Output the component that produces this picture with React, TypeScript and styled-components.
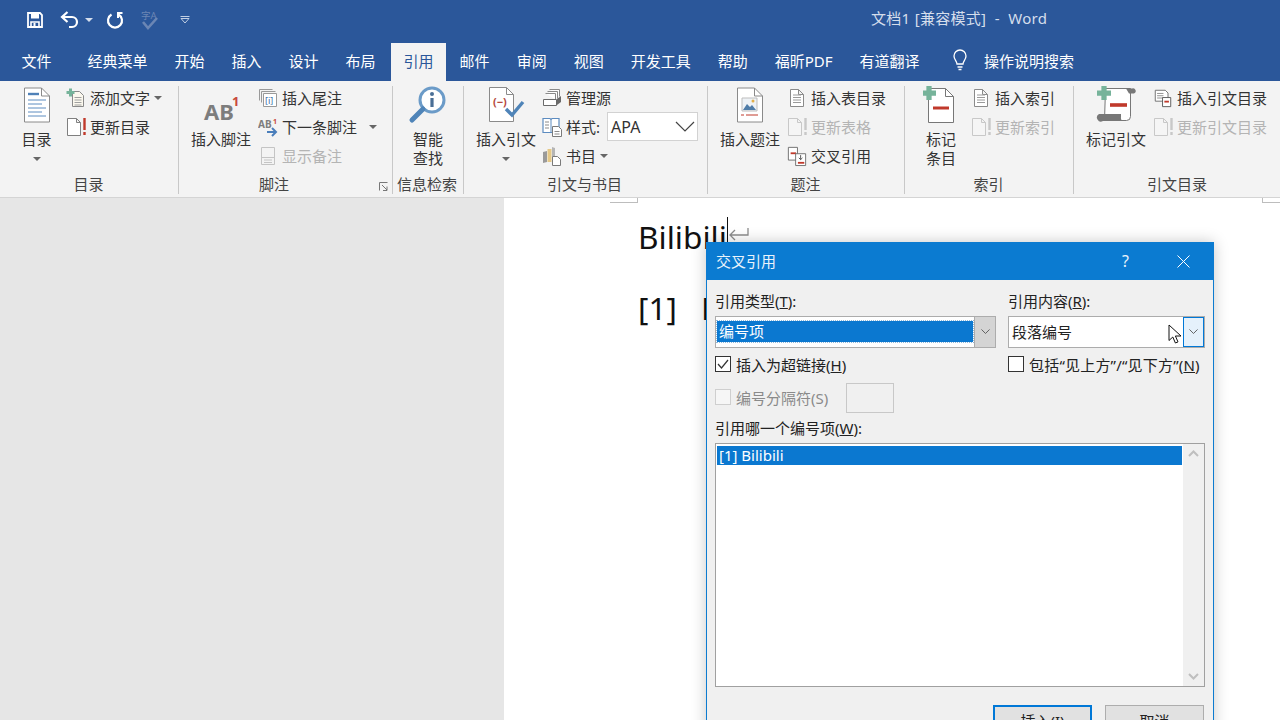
import React from 'react'
import styled, { createGlobalStyle } from 'styled-components'

const FONT = `"Noto Sans", "Noto Sans CJK SC", sans-serif`

const GlobalStyle = createGlobalStyle`
  html, body {
    margin: 0;
    padding: 0;
    overflow: hidden;
    background: #fff;
  }
  body {
    font-family: ${FONT};
    font-size: 15px;
    color: #333;
  }
`

const Screen = styled.div`
  position: relative;
  display: flex;
  flex-direction: column;
  width: 1280px;
  height: 720px;
  overflow: hidden;
`

const TitleBar = styled.div`
  display: flex;
  align-items: center;
  height: 40px;
  background: #2b579a;
  color: #d5deec;
`

const Qat = styled.div`
  display: flex;
  align-items: center;
  width: 871px;
  padding-left: 24px;
  box-sizing: border-box;
`

const QatSlot = styled.div<{ $w: number; $ml?: number }>`
  display: flex;
  align-items: center;
  justify-content: center;
  width: ${({ $w }) => $w}px;
  margin-left: ${({ $ml }) => $ml ?? 0}px;
`

const DocTitle = styled.div`
  font-size: 15px;
  letter-spacing: 0.3px;
  margin-top: -5px;
  white-space: pre;
`

const TabBar = styled.div`
  display: flex;
  align-items: stretch;
  height: 41px;
  background: #2b579a;
  padding-left: 8px;
`

const Tab = styled.div<{ $active?: boolean; $gap?: number }>`
  display: flex;
  align-items: center;
  padding: 0 ${({ $active }) => ($active ? 12.5 : 13.5)}px 4px;
  margin-top: 3px;
  margin-left: ${({ $active }) => ($active ? 2 : 0)}px;
  margin-right: ${({ $gap }) => $gap ?? 0}px;
  color: ${({ $active }) => ($active ? '#2b579a' : '#fff')};
  background: ${({ $active }) => ($active ? '#f3f3f3' : 'transparent')};
  font-size: 15px;
  white-space: nowrap;
`

const TellMe = styled.div`
  display: flex;
  align-items: center;
  gap: 15px;
  margin-left: 18px;
  margin-top: 3px;
  padding-bottom: 4px;
  color: #fff;
  font-size: 15px;
`

const Ribbon = styled.div`
  display: flex;
  height: 117px;
  box-sizing: border-box;
  background: #f3f3f3;
  border-bottom: 1px solid #d4d4d4;
`

const Group = styled.div<{ $w: number; $last?: boolean }>`
  position: relative;
  display: flex;
  flex-direction: column;
  width: ${({ $w }) => $w}px;
  flex: none;
  box-sizing: border-box;
  &::after {
    content: '';
    display: ${({ $last }) => ($last ? 'none' : 'block')};
    position: absolute;
    right: 0;
    top: 5px;
    bottom: 3px;
    width: 1px;
    background: #c8c8c8;
  }
`

const GroupBody = styled.div<{ $pad: number; $gap?: number }>`
  display: flex;
  height: 91px;
  box-sizing: border-box;
  padding: 2px 0 0 ${({ $pad }) => $pad}px;
  gap: ${({ $gap }) => $gap ?? 7}px;
`

const GroupLabel = styled.div<{ $right?: number }>`
  text-align: center;
  line-height: 24px;
  padding-right: ${({ $right }) => $right ?? 0}px;
  font-size: 15px;
  color: #444;
`

const Launcher = styled.div`
  position: absolute;
  right: 5px;
  bottom: 6px;
  display: flex;
`

const BigButton = styled.div<{ $w: number }>`
  display: flex;
  flex-direction: column;
  align-items: center;
  width: ${({ $w }) => $w}px;
  flex: none;
`

const BigIcon = styled.div`
  display: flex;
  align-items: center;
  justify-content: center;
  height: 43px;
`

const BigText = styled.div`
  line-height: 19px;
  text-align: center;
  white-space: nowrap;
  font-size: 15px;
  margin-top: 4px;
`

const Caret = styled.span<{ $light?: boolean; $ml?: number }>`
  display: inline-block;
  width: 0;
  height: 0;
  margin-left: ${({ $ml }) => $ml ?? 0}px;
  border-left: 4px solid transparent;
  border-right: 4px solid transparent;
  border-top: 4px solid ${({ $light }) => ($light ? '#d5deec' : '#666')};
`

const BigCaret = styled(Caret)`
  margin-top: 8px;
`

const SmallColumn = styled.div<{ $ml?: number }>`
  display: flex;
  flex-direction: column;
  margin-left: ${({ $ml }) => $ml ?? 0}px;
`

const SmallRow = styled.div<{ $disabled?: boolean }>`
  display: flex;
  align-items: center;
  height: 29px;
  gap: 4px;
  color: ${({ $disabled }) => ($disabled ? '#b4b4b4' : '#333')};
  white-space: nowrap;
`

const SmallIcon = styled.span`
  display: flex;
  width: 20px;
  justify-content: center;
  flex: none;
`

const StyleSelect = styled.div`
  display: flex;
  align-items: center;
  justify-content: space-between;
  width: 91px;
  height: 29px;
  margin-left: 3px;
  padding: 0 2px 0 3px;
  box-sizing: border-box;
  background: #fff;
  border: 1px solid #d2d2d2;
  font-size: 16px;
`

const Workspace = styled.div`
  display: flex;
  flex: 1;
  min-height: 0;
`

const Gutter = styled.div`
  width: 504px;
  flex: none;
  background: #e6e6e6;
`

const Sheet = styled.div`
  position: relative;
  flex: 1;
  padding: 17px 0 0 134px;
  background: #fff;
  color: #111;
  font-size: 31.6px;
  line-height: 44px;
`

const CropMark = styled.div<{ $side: 'left' | 'right' }>`
  position: absolute;
  top: 0;
  height: 5px;
  box-sizing: border-box;
  border-bottom: 1px solid #bdbdbd;
  ${({ $side }) =>
    $side === 'left'
      ? 'left: 106px; width: 28px; border-right: 1px solid #bdbdbd;'
      : 'right: 0; width: 18px; border-left: 1px solid #bdbdbd;'}
`

const DocLine = styled.div`
  display: flex;
  align-items: center;
  white-space: nowrap;
  margin-bottom: 27px;
`

const Cursor = styled.span`
  display: inline-block;
  width: 1px;
  height: 40px;
  background: #111;
`

const ReturnMark = styled.svg`
  margin-top: -4px;
`

const RefNumber = styled.span`
  width: 63px;
`

const Dialog = styled.div`
  position: absolute;
  left: 706px;
  top: 242px;
  width: 508px;
  height: 500px;
  box-sizing: border-box;
  background: #f0f0f0;
  border: 1px solid #0c7bd0;
  box-shadow: 0 0 14px rgba(0, 0, 0, 0.22);
`

const DialogTitle = styled.div`
  display: flex;
  align-items: center;
  height: 37px;
  padding: 0 23px 0 9px;
  background: #0b7bd1;
  color: #eaf3fb;
  font-size: 15px;
`

const DialogTitleText = styled.div`
  flex: 1;
  margin-top: -2px;
`

const TitleHelp = styled.span`
  width: 55px;
  font-size: 16px;
  margin-top: -2px;
`

const DialogBody = styled.div`
  display: flex;
  flex-direction: column;
  padding: 10px 8px 0 8px;
  color: #222;
  font-size: 15px;
`

const TwoColumns = styled.div`
  display: grid;
  grid-template-columns: 281px 197px;
  column-gap: 12px;
`

const FieldLabel = styled.div`
  line-height: 22px;
  height: 26px;
  white-space: nowrap;
`

const Combo = styled.div`
  display: flex;
  height: 32px;
  box-sizing: border-box;
  background: #fff;
  border: 1px solid #acacac;
`

const ComboValue = styled.div<{ $selected?: boolean }>`
  flex: 1;
  display: flex;
  align-items: center;
  margin: ${({ $selected }) => ($selected ? '4px 1px 5px 1px' : '0')};
  padding: 0 0 2px ${({ $selected }) => ($selected ? '2px' : '3px')};
  background: ${({ $selected }) => ($selected ? '#0b78d0' : 'transparent')};
  color: ${({ $selected }) => ($selected ? '#fff' : '#222')};
  outline: ${({ $selected }) => ($selected ? '1px dotted #8fb9dc' : 'none')};
`

const ComboArrow = styled.div<{ $focus?: boolean }>`
  display: flex;
  align-items: center;
  justify-content: center;
  width: 21px;
  flex: none;
  box-sizing: border-box;
  background: ${({ $focus }) => ($focus ? '#e5f1fb' : '#d4d4d4')};
  border: ${({ $focus }) => ($focus ? '1px solid #0078d7' : 'none')};
  border-left: 1px solid ${({ $focus }) => ($focus ? '#0078d7' : '#acacac')};
`

const CheckRow = styled.div<{ $disabled?: boolean }>`
  display: flex;
  align-items: center;
  gap: 5px;
  height: 32px;
  white-space: nowrap;
  color: ${({ $disabled }) => ($disabled ? '#8a8a8a' : '#222')};
`

const SeparatorCheck = styled(CheckRow)`
  height: 30px;
  margin-top: -2px;
`

const WideLabel = styled.span`
  letter-spacing: 0.2px;
`

const CheckBox = styled.span<{ $disabled?: boolean }>`
  display: flex;
  align-items: center;
  justify-content: center;
  width: 16px;
  height: 16px;
  flex: none;
  box-sizing: border-box;
  background: ${({ $disabled }) => ($disabled ? '#f6f6f6' : '#fff')};
  border: 1px solid ${({ $disabled }) => ($disabled ? '#cfcfcf' : '#333')};
`

const SeparatorRow = styled.div`
  display: flex;
  align-items: center;
  height: 30px;
  gap: 18px;
  margin-top: 3px;
`

const SeparatorInput = styled.div`
  width: 48px;
  height: 30px;
  box-sizing: border-box;
  border: 1px solid #c8c8c8;
  background: #f0f0f0;
`

const ListLabel = styled.div`
  line-height: 30px;
  height: 30px;
  white-space: nowrap;
`

const ListBox = styled.div`
  display: flex;
  width: 490px;
  height: 244px;
  box-sizing: border-box;
  background: #fff;
  border: 1px solid #a0a0a0;
`

const ListItems = styled.div`
  flex: 1;
  padding: 2px 1px;
`

const ListItem = styled.div`
  height: 19px;
  line-height: 19px;
  padding-left: 2px;
  background: #0b78d0;
  color: #fff;
  font-size: 15px;
`

const ScrollBar = styled.div`
  display: flex;
  flex-direction: column;
  justify-content: space-between;
  align-items: center;
  width: 21px;
  flex: none;
  padding: 6px 0;
  box-sizing: border-box;
  background: #f0f0f0;
`

const ButtonRow = styled.div`
  display: flex;
  justify-content: flex-end;
  gap: 13px;
  margin-top: 18px;
  padding-right: 1px;
`

const DialogButton = styled.div<{ $primary?: boolean }>`
  display: flex;
  align-items: center;
  justify-content: center;
  width: 99px;
  height: 30px;
  box-sizing: border-box;
  background: #e1e1e1;
  border: ${({ $primary }) => ($primary ? '2px solid #0078d7' : '1px solid #adadad')};
`

const MouseCursor = styled.svg`
  position: absolute;
  left: 1168px;
  top: 324px;
`

/* ---- icons ---- */

const Lines = ({ x, y, w, n, gap = 2.5, c = '#9a9a9a' }: { x: number; y: number; w: number; n: number; gap?: number; c?: string }) => (
  <path d={Array.from({ length: n }, (_, i) => `M${x} ${y + i * gap}h${w}`).join(' ')} stroke={c} fill="none" />
)

const Bang = ({ c = '#c0392b' }: { c?: string }) => (
  <path d="M18.5 1v12M18.5 15v3" stroke={c} strokeWidth="2.4" fill="none" />
)

const PlusGreen = ({ x, y, s = 4 }: { x: number; y: number; s?: number }) => (
  <path d={`M${x - s} ${y}h${s * 2}M${x} ${y - s}v${s * 2}`} stroke="#76b39a" strokeWidth={s * 0.75} fill="none" />
)

const IconSave = () => (
  <svg width="18" height="18" viewBox="0 0 18 18" fill="none">
    <path d="M2 2h12l2 2v12H2z" stroke="#fff" strokeWidth="1.8" />
    <path d="M5 2.5h8v5H5z" fill="#fff" />
    <path d="M5 16v-5h8v5" stroke="#fff" strokeWidth="1.6" />
    <path d="M7.5 12v3h2v-3z" fill="#fff" />
  </svg>
)

const IconUndo = () => (
  <svg width="20" height="18" viewBox="0 0 20 18" fill="none">
    <path d="M3 6h9a5 5 0 0 1 0 10H9" stroke="#fff" strokeWidth="2.2" />
    <path d="M7.5 1L2 6l5.5 5" stroke="#fff" strokeWidth="2.2" />
  </svg>
)

const IconRepeat = () => (
  <svg width="18" height="18" viewBox="0 0 18 18" fill="none">
    <path d="M5.5 3.5a7 7 0 1 0 7 0" stroke="#fff" strokeWidth="2.2" />
    <path d="M11 1h5.5v2H13v4h-2z" fill="#fff" />
  </svg>
)

const IconSpell = () => (
  <svg width="20" height="22" viewBox="0 0 20 22" fill="none">
    <text x="1" y="10" fontSize="9.5" fill="#6b86b4" fontFamily={FONT}>字A</text>
    <path d="M3 13l5 6 9-10" stroke="#6b86b4" strokeWidth="2.6" />
  </svg>
)

const IconCustomize = () => (
  <svg width="10" height="10" viewBox="0 0 10 10" fill="none">
    <path d="M0.5 1.5h9M1 3.5l4 4.5 4-4.5z" stroke="#c2cfe3" />
  </svg>
)

const IconBulb = () => (
  <svg width="18" height="22" viewBox="0 0 18 22" fill="none">
    <path d="M6 15c0-3-3-4-3-8a6 6 0 0 1 12 0c0 4-3 5-3 8z" stroke="#fff" strokeWidth="1.3" />
    <path d="M6.5 18h5M7.5 20.5h3" stroke="#fff" strokeWidth="1.3" />
  </svg>
)

const IconToc = () => (
  <svg width="28" height="36" viewBox="0 0 28 36" fill="none">
    <path d="M1.5 1h17l8 8v26h-25z" fill="#fff" stroke="#8a8a8a" />
    <path d="M18.5 1v8h8" stroke="#8a8a8a" />
    <path d="M5 7h11" stroke="#4f81b8" strokeWidth="2.4" />
    <path d="M5 13h18M5 17h14M5 21h18M5 25h14M5 29h18" stroke="#5d8cc0" />
  </svg>
)

const IconAddText = () => (
  <svg width="20" height="20" viewBox="0 0 20 20" fill="none">
    <path d="M6.5 3.5h7l4 4v11h-11z" fill="#fbf8ee" stroke="#8a8a8a" />
    <Lines x={8.5} y={9.5} w={7} n={4} gap={2.5} c="#a0a0a0" />
    <PlusGreen x={4.5} y={4.5} />
  </svg>
)

const IconUpdate = ({ disabled }: { disabled?: boolean }) => (
  <svg width="20" height="20" viewBox="0 0 20 20" fill="none">
    <path d="M1.5 1.5h9l4 4v13h-13z M10.5 1.5v4h4" fill={disabled ? '#f5f5f5' : '#fff'} stroke={disabled ? '#c8c8c8' : '#7f7f7f'} />
    <Bang c={disabled ? '#c8c8c8' : '#c0392b'} />
  </svg>
)

const IconFootnote = () => (
  <svg width="44" height="36" viewBox="0 0 44 36">
    <text x="5" y="33" fontSize="22" fontWeight="700" fill="#7d7d7d" fontFamily={FONT}>AB</text>
    <text x="33" y="19" fontSize="13" fontWeight="700" fill="#c8493c" fontFamily={FONT}>1</text>
  </svg>
)

const IconEndnote = () => (
  <svg width="20" height="20" viewBox="0 0 20 20" fill="none">
    <path d="M1.5 1.5h13M3.5 3.5h14M1.5 1.5v11M3.5 3.5v11" stroke="#999" />
    <path d="M5.5 5.5h13v13h-13z" fill="#fff" stroke="#999" />
    <text x="7" y="16" fontSize="9" fill="#3d6fa8" fontFamily={FONT}>[i]</text>
  </svg>
)

const IconNextFootnote = () => (
  <svg width="20" height="20" viewBox="0 0 20 20" fill="none">
    <text x="0" y="11" fontSize="10" fontWeight="700" fill="#7d7d7d" fontFamily={FONT}>AB</text>
    <text x="15" y="7" fontSize="7" fontWeight="700" fill="#c8493c" fontFamily={FONT}>1</text>
    <path d="M9 15h9M14 11l4 4-4 4" stroke="#4a7ebb" strokeWidth="2" />
  </svg>
)

const IconShowNotes = () => (
  <svg width="20" height="20" viewBox="0 0 20 20" fill="none">
    <path d="M3.5 1.5h13v17h-13zM3.5 11.5h13" stroke="#c4c4c4" />
    <Lines x={6} y={14} w={8} n={2} gap={2.5} c="#c4c4c4" />
  </svg>
)

const IconSmart = () => (
  <svg width="40" height="40" viewBox="0 0 40 40" fill="none">
    <circle cx="24" cy="15" r="12" fill="#fff" stroke="#6b9bc8" strokeWidth="3" />
    <path d="M15 24L4 35" stroke="#4f84b8" strokeWidth="5" strokeLinecap="round" />
    <circle cx="24" cy="9" r="2" fill="#4a6f96" />
    <path d="M24 13v9" stroke="#4a6f96" strokeWidth="3.2" />
  </svg>
)

const IconCitation = () => (
  <svg width="38" height="38" viewBox="0 0 38 38" fill="none">
    <path d="M2.5 1.5h17l7 7v27h-24z" fill="#fff" stroke="#8a8a8a" />
    <path d="M19.5 1.5v7h7" stroke="#8a8a8a" />
    <text x="6" y="20" fontSize="11" fontWeight="700" fill="#b5493e" fontFamily={FONT}>(−)</text>
    <path d="M19 23l6 6 11-13" stroke="#4f84b8" strokeWidth="3.4" />
  </svg>
)

const IconSources = () => (
  <svg width="20" height="20" viewBox="0 0 20 20" fill="none">
    <path d="M7.5 1.5h10v7M5.5 3.5h10v7M3.5 5.5h10v6" stroke="#8a8a8a" fill="#fff" />
    <path d="M1.5 11.5h13v6h-13z" fill="#fff" stroke="#6a6a6a" />
    <path d="M15 17l4-3V8l-4 3z" fill="#6a6a6a" />
  </svg>
)

const IconStyleBook = () => (
  <svg width="20" height="22" viewBox="0 0 20 22" fill="none">
    <path d="M1 2.5h7l1 1 1-1h7v14H1z" fill="#fff" stroke="#5d8cc0" strokeWidth="1.2" />
    <path d="M9 3.5v13" stroke="#5d8cc0" />
    <path d="M3 6h4M3 9h4M3 12h4" stroke="#8a8a8a" />
    <path d="M10.5 10.5h6l3 3v7h-9z" fill="#fff" stroke="#7a7a7a" />
    <path d="M12.5 15.5h5M12.5 18h5" stroke="#8a8a8a" />
  </svg>
)

const IconBooks = () => (
  <svg width="20" height="20" viewBox="0 0 20 20" fill="none">
    <path d="M1 6l4-1v11l-4 1z" fill="#9a9a9a" />
    <path d="M5.5 3h4v13h-4z" fill="#e5c886" />
    <path d="M10 1l3 1v8h-3z" fill="#b5b5b5" />
    <path d="M10.5 10.5h5l3 3v6h-8z" fill="#fff" stroke="#7a7a7a" />
  </svg>
)

const IconCaption = () => (
  <svg width="28" height="36" viewBox="0 0 28 36" fill="none">
    <path d="M1.5 1h17l8 8v26h-25z" fill="#fff" stroke="#8a8a8a" />
    <path d="M18.5 1v8h8" stroke="#8a8a8a" />
    <path d="M6 11h15v13H6z" fill="#eef2f6" stroke="#bdbdbd" />
    <path d="M7 23l4-6 3 3 2-2 4 5z" fill="#4f7ca8" />
    <circle cx="17" cy="14" r="1.5" fill="#e2b04a" />
    <path d="M5 28h3M10 28h12" stroke="#c0392b" />
  </svg>
)

const IconTableOfFigures = () => (
  <svg width="20" height="20" viewBox="0 0 20 20" fill="none">
    <path d="M3.5 1.5h8l5 5v12h-13z M11.5 1.5v5h5" fill="#fff" stroke="#8a8a8a" />
    <Lines x={6} y={7} w={8} n={4} gap={2.5} />
  </svg>
)

const IconCrossRef = () => (
  <svg width="22" height="22" viewBox="0 0 22 22" fill="none">
    <path d="M1.5 1.5h10v14h-10z" fill="#fff" stroke="#6a6a6a" />
    <path d="M4 8h6" stroke="#c0392b" strokeWidth="2" />
    <path d="M9.5 8.5h11v13h-11z" fill="#fff" stroke="#6a6a6a" />
    <path d="M15 10v5M13 13l2 2 2-2" stroke="#4a4a4a" />
    <path d="M12 18.5h7" stroke="#c0392b" strokeWidth="2" />
  </svg>
)

const IconMarkEntry = () => (
  <svg width="36" height="40" viewBox="0 0 36 40" fill="none">
    <path d="M5.5 3.5h17l8 8v26h-25z" fill="#fff" stroke="#777" />
    <path d="M22.5 3.5v8h8" stroke="#777" />
    <path d="M10 23h16" stroke="#c0392b" strokeWidth="3" />
    <PlusGreen x={6} y={8} s={7} />
  </svg>
)

const IconMarkCitation = () => (
  <svg width="40" height="40" viewBox="0 0 40 40" fill="none">
    <path d="M9.5 3.5h25v28a4 4 0 0 1-4 4h-22z" fill="#fff" stroke="#777" />
    <path d="M30 3.5h6a2 2 0 0 1 2 5h-5z" fill="#777" />
    <path d="M3 29h22v3a3.5 3.5 0 0 0 3 4H7a4 4 0 0 1-4-7z" fill="#777" />
    <path d="M14 20h17" stroke="#c0392b" strokeWidth="3.6" />
    <PlusGreen x={8} y={8} s={7} />
  </svg>
)

const IconToa = () => (
  <svg width="22" height="20" viewBox="0 0 22 20" fill="none">
    <path d="M2.5 1.5h11l3 3v9h-14z" fill="#fff" stroke="#6a6a6a" />
    <Lines x={4.5} y={5} w={7} n={3} gap={2.5} c="#8a8a8a" />
    <path d="M10.5 9.5h9v10h-9z" fill="#fff" stroke="#555" />
    <path d="M12.5 14h5" stroke="#c0392b" strokeWidth="2" />
  </svg>
)

const IconLauncher = () => (
  <svg width="9" height="9" viewBox="0 0 9 9" fill="none">
    <path d="M0.5 8.5v-8h8M3 3l5 5M8 4.5v4H4" stroke="#777" />
  </svg>
)

const Chevron = ({ w = 9, c = '#555' }: { w?: number; c?: string }) => (
  <svg width={w} height={w * 0.6} viewBox="0 0 10 6" fill="none">
    <path d="M0.5 0.5L5 5l4.5-4.5" stroke={c} strokeWidth={w > 10 ? 0.6 : 1} />
  </svg>
)

const ChevronUp = ({ c = '#bfbfbf' }: { c?: string }) => (
  <svg width="11" height="7" viewBox="0 0 11 7" fill="none">
    <path d="M1 6l4.5-4.5L10 6" stroke={c} strokeWidth="2" />
  </svg>
)

const ChevronDown = ({ c = '#bfbfbf' }: { c?: string }) => (
  <svg width="11" height="7" viewBox="0 0 11 7" fill="none">
    <path d="M1 1l4.5 4.5L10 1" stroke={c} strokeWidth="2" />
  </svg>
)

const tabs = ['开始', '插入', '设计', '布局']
const tabsAfter = ['邮件', '审阅', '视图', '开发工具', '帮助', '福昕PDF', '有道翻译']

const App = () => {
  return (
    <Screen>
      <GlobalStyle />
      <TitleBar>
        <Qat>
          <QatSlot $w={22}><IconSave /></QatSlot>
          <QatSlot $w={32} $ml={8}><IconUndo /></QatSlot>
          <QatSlot $w={6}><Caret $light /></QatSlot>
          <QatSlot $w={24} $ml={11}><IconRepeat /></QatSlot>
          <QatSlot $w={24} $ml={11}><IconSpell /></QatSlot>
          <QatSlot $w={24} $ml={11}><IconCustomize /></QatSlot>
        </Qat>
        <DocTitle>文档1 [兼容模式]  -  Word</DocTitle>
      </TitleBar>

      <TabBar>
        <Tab $gap={9}>文件</Tab>
        <Tab>经典菜单</Tab>
        {tabs.map((tab) => (
          <Tab key={tab}>{tab}</Tab>
        ))}
        <Tab $active>引用</Tab>
        {tabsAfter.map((tab) => (
          <Tab key={tab}>{tab}</Tab>
        ))}
        <TellMe>
          <IconBulb />
          操作说明搜索
        </TellMe>
      </TabBar>

      <Ribbon>
        <Group $w={179}>
          <GroupBody $pad={21}>
            <BigButton $w={31}>
              <BigIcon><IconToc /></BigIcon>
              <BigText>目录</BigText>
              <BigCaret />
            </BigButton>
            <SmallColumn $ml={7}>
              <SmallRow>
                <SmallIcon><IconAddText /></SmallIcon>添加文字<Caret />
              </SmallRow>
              <SmallRow>
                <SmallIcon><IconUpdate /></SmallIcon>更新目录
              </SmallRow>
            </SmallColumn>
          </GroupBody>
          <GroupLabel $right={2}>目录</GroupLabel>
        </Group>

        <Group $w={214}>
          <GroupBody $pad={12}>
            <BigButton $w={60}>
              <BigIcon><IconFootnote /></BigIcon>
              <BigText>插入脚注</BigText>
            </BigButton>
            <SmallColumn>
              <SmallRow>
                <SmallIcon><IconEndnote /></SmallIcon>插入尾注
              </SmallRow>
              <SmallRow>
                <SmallIcon><IconNextFootnote /></SmallIcon>下一条脚注<Caret $ml={8} />
              </SmallRow>
              <SmallRow $disabled>
                <SmallIcon><IconShowNotes /></SmallIcon>显示备注
              </SmallRow>
            </SmallColumn>
          </GroupBody>
          <GroupLabel $right={24}>脚注</GroupLabel>
          <Launcher><IconLauncher /></Launcher>
        </Group>

        <Group $w={71}>
          <GroupBody $pad={5}>
            <BigButton $w={60}>
              <BigIcon><IconSmart /></BigIcon>
              <BigText>智能<br />查找</BigText>
            </BigButton>
          </GroupBody>
          <GroupLabel $right={3}>信息检索</GroupLabel>
        </Group>

        <Group $w={244}>
          <GroupBody $pad={12} $gap={6}>
            <BigButton $w={60}>
              <BigIcon><IconCitation /></BigIcon>
              <BigText>插入引文</BigText>
              <BigCaret />
            </BigButton>
            <SmallColumn>
              <SmallRow>
                <SmallIcon><IconSources /></SmallIcon>管理源
              </SmallRow>
              <SmallRow>
                <SmallIcon><IconStyleBook /></SmallIcon>样式:
                <StyleSelect>APA<Chevron w={20} c="#444" /></StyleSelect>
              </SmallRow>
              <SmallRow>
                <SmallIcon><IconBooks /></SmallIcon>书目<Caret />
              </SmallRow>
            </SmallColumn>
          </GroupBody>
          <GroupLabel $right={3}>引文与书目</GroupLabel>
        </Group>

        <Group $w={197}>
          <GroupBody $pad={12}>
            <BigButton $w={60}>
              <BigIcon><IconCaption /></BigIcon>
              <BigText>插入题注</BigText>
            </BigButton>
            <SmallColumn>
              <SmallRow>
                <SmallIcon><IconTableOfFigures /></SmallIcon>插入表目录
              </SmallRow>
              <SmallRow $disabled>
                <SmallIcon><IconUpdate disabled /></SmallIcon>更新表格
              </SmallRow>
              <SmallRow>
                <SmallIcon><IconCrossRef /></SmallIcon>交叉引用
              </SmallRow>
            </SmallColumn>
          </GroupBody>
          <GroupLabel $right={2}>题注</GroupLabel>
        </Group>

        <Group $w={169}>
          <GroupBody $pad={13}>
            <BigButton $w={46}>
              <BigIcon><IconMarkEntry /></BigIcon>
              <BigText>标记<br />条目</BigText>
            </BigButton>
            <SmallColumn>
              <SmallRow>
                <SmallIcon><IconTableOfFigures /></SmallIcon>插入索引
              </SmallRow>
              <SmallRow $disabled>
                <SmallIcon><IconUpdate disabled /></SmallIcon>更新索引
              </SmallRow>
            </SmallColumn>
          </GroupBody>
          <GroupLabel $right={2}>索引</GroupLabel>
        </Group>

        <Group $w={206} $last>
          <GroupBody $pad={12}>
            <BigButton $w={60}>
              <BigIcon><IconMarkCitation /></BigIcon>
              <BigText>标记引文</BigText>
            </BigButton>
            <SmallColumn>
              <SmallRow>
                <SmallIcon><IconToa /></SmallIcon>插入引文目录
              </SmallRow>
              <SmallRow $disabled>
                <SmallIcon><IconUpdate disabled /></SmallIcon>更新引文目录
              </SmallRow>
            </SmallColumn>
          </GroupBody>
          <GroupLabel>引文目录</GroupLabel>
        </Group>
      </Ribbon>

      <Workspace>
        <Gutter />
        <Sheet>
          <CropMark $side="left" />
          <CropMark $side="right" />
          <DocLine>
            Bilibili
            <Cursor />
            <ReturnMark width="22" height="16" viewBox="0 0 22 16" fill="none">
              <path d="M20 1v7H2M7 3L2 8l5 5" stroke="#8c8c8c" strokeWidth="1.3" />
            </ReturnMark>
          </DocLine>
          <DocLine>
            <RefNumber>[1]</RefNumber>
            Bilibili
          </DocLine>
        </Sheet>
      </Workspace>

      <Dialog>
        <DialogTitle>
          <DialogTitleText>交叉引用</DialogTitleText>
          <TitleHelp>?</TitleHelp>
          <svg width="13" height="13" viewBox="0 0 13 13" fill="none">
            <path d="M0.5 0.5l12 12M12.5 0.5l-12 12" stroke="#fff" />
          </svg>
        </DialogTitle>
        <DialogBody>
          <TwoColumns>
            <div>
              <FieldLabel>引用类型(<u>T</u>):</FieldLabel>
              <Combo>
                <ComboValue $selected>编号项</ComboValue>
                <ComboArrow><Chevron /></ComboArrow>
              </Combo>
            </div>
            <div>
              <FieldLabel>引用内容(<u>R</u>):</FieldLabel>
              <Combo>
                <ComboValue>段落编号</ComboValue>
                <ComboArrow $focus><Chevron /></ComboArrow>
              </Combo>
            </div>
            <CheckRow>
              <CheckBox>
                <svg width="12" height="12" viewBox="0 0 12 12" fill="none">
                  <path d="M1 6l3.5 4L11 2" stroke="#333" strokeWidth="1.2" />
                </svg>
              </CheckBox>
              <span>插入为超链接(<u>H</u>)</span>
            </CheckRow>
            <CheckRow>
              <CheckBox />
              <WideLabel>包括“见上方”/“见下方”(<u>N</u>)</WideLabel>
            </CheckRow>
          </TwoColumns>
          <SeparatorRow>
            <SeparatorCheck $disabled>
              <CheckBox $disabled />
              编号分隔符(S)
            </SeparatorCheck>
            <SeparatorInput />
          </SeparatorRow>
          <ListLabel>引用哪一个编号项(<u>W</u>):</ListLabel>
          <ListBox>
            <ListItems>
              <ListItem>[1] Bilibili</ListItem>
            </ListItems>
            <ScrollBar>
              <ChevronUp />
              <ChevronDown />
            </ScrollBar>
          </ListBox>
          <ButtonRow>
            <DialogButton $primary>插入(I)</DialogButton>
            <DialogButton>取消</DialogButton>
          </ButtonRow>
        </DialogBody>
      </Dialog>

      <MouseCursor width="14" height="21" viewBox="0 0 14 21" fill="none">
        <path d="M1 1v15.5l3.8-3.5 2.6 6 2.6-1.1-2.6-5.9H13z" fill="#fff" stroke="#111" />
      </MouseCursor>
    </Screen>
  )
}

export default App
